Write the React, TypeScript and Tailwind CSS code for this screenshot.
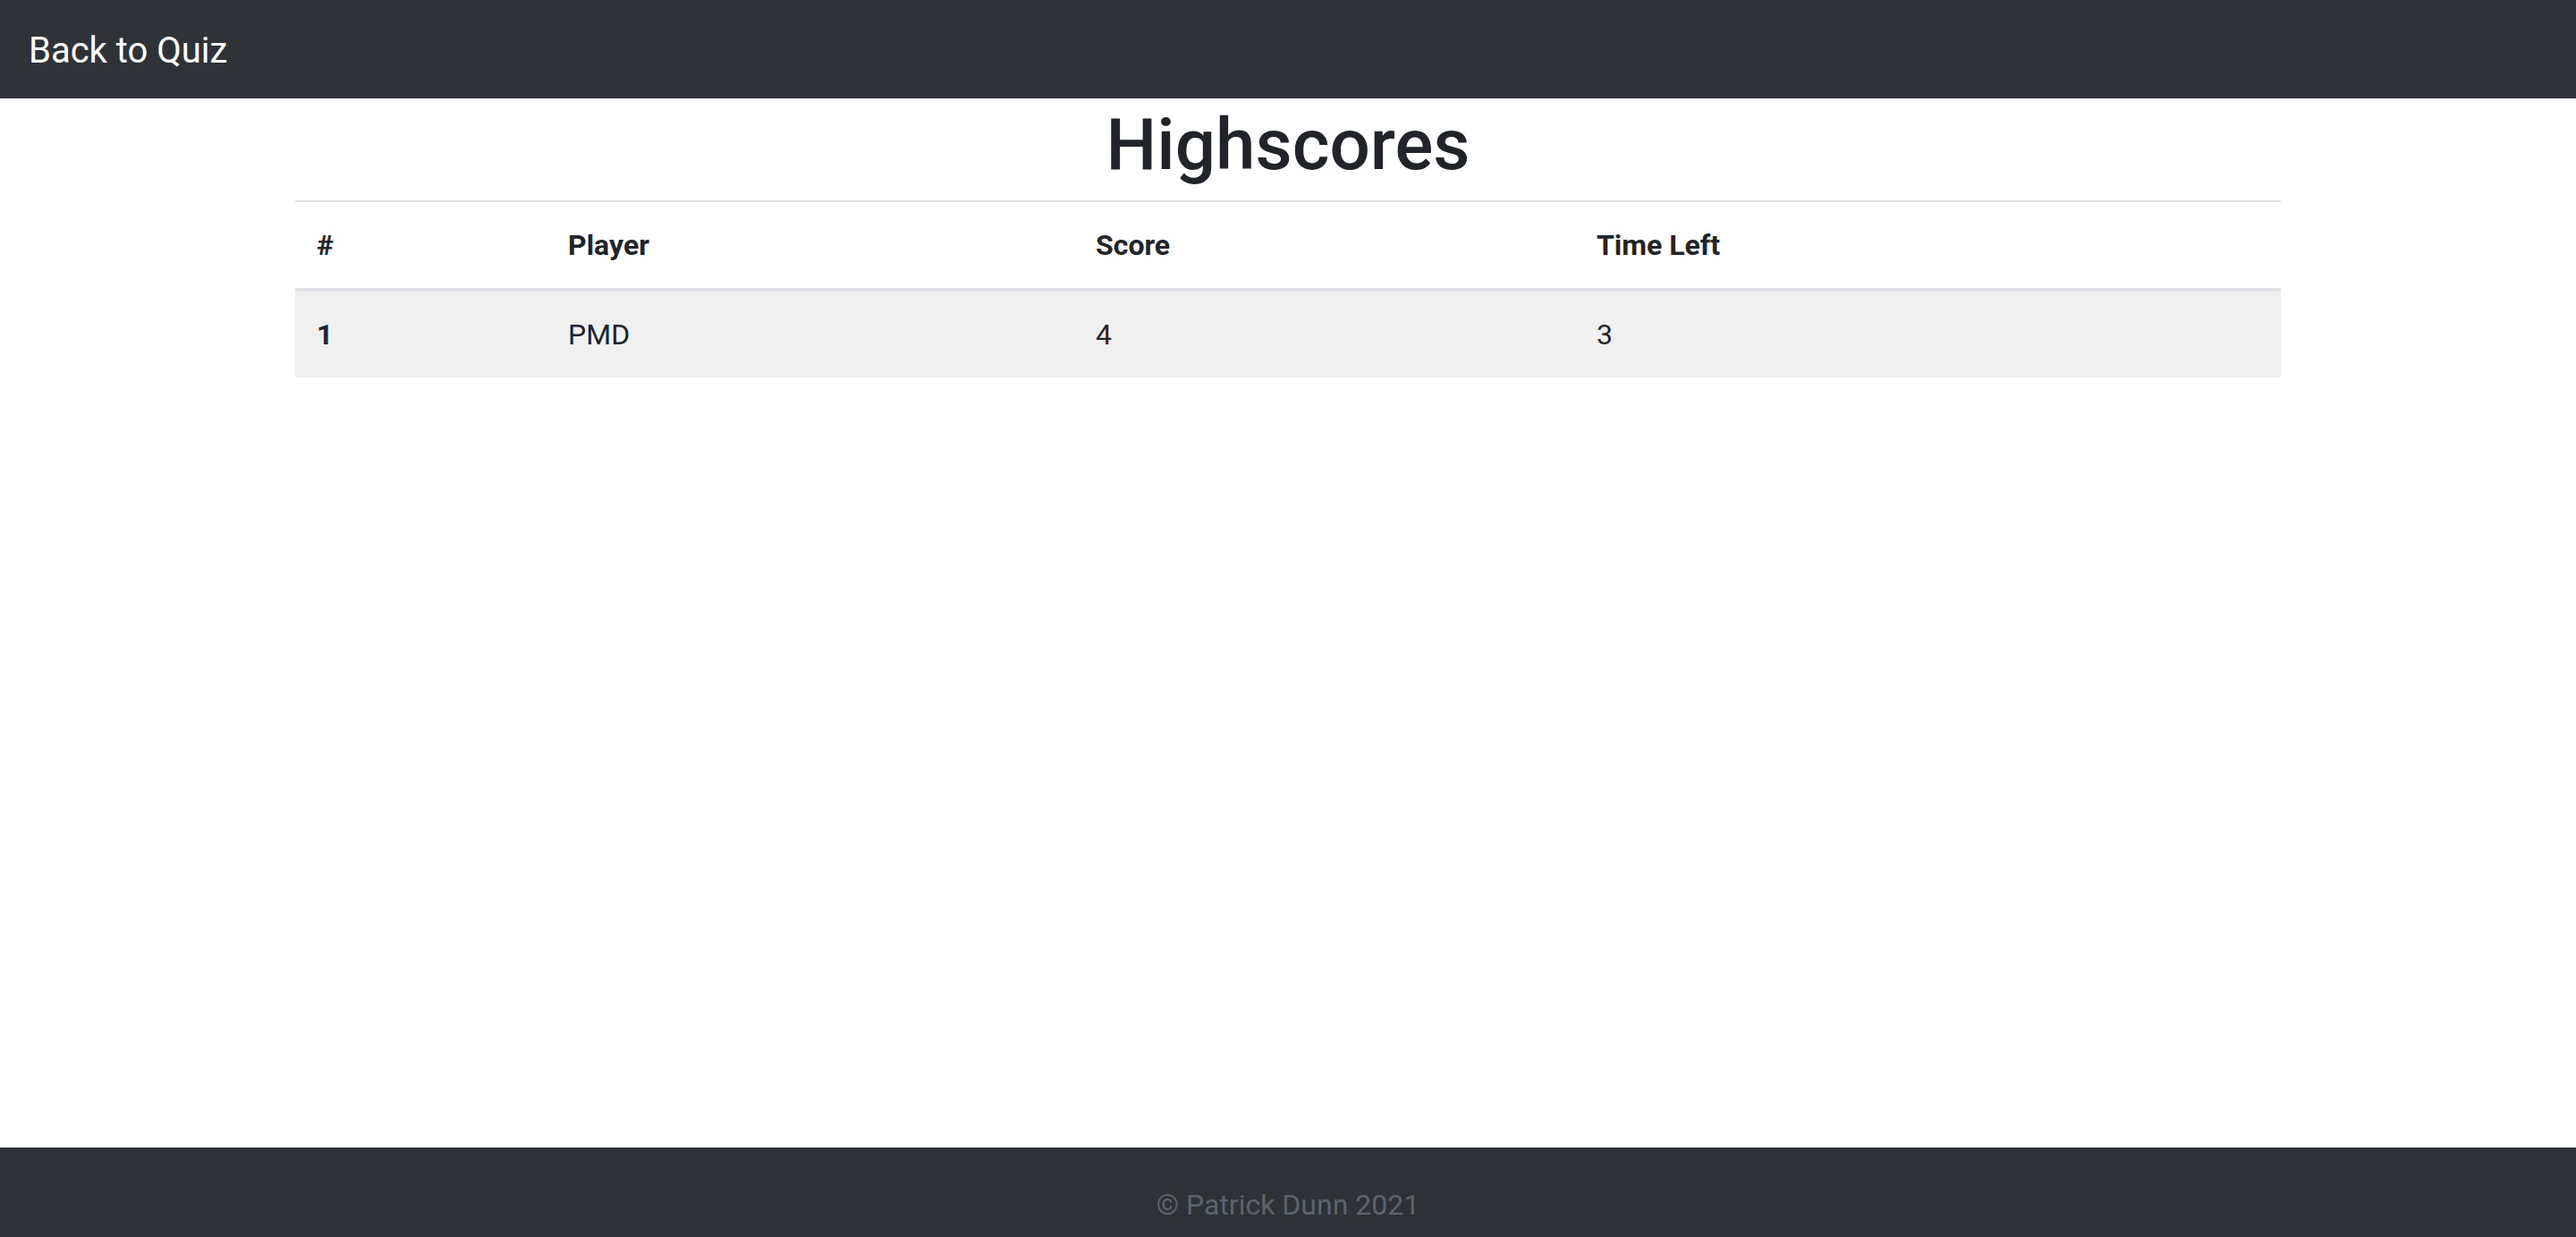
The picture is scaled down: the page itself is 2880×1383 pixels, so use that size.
export default function App() {
  const scores = [{ rank: 1, player: "PMD", score: 4, timeLeft: 3 }]

  return (
    <div className="min-h-screen flex flex-col bg-white text-[#212529] font-['Roboto','Liberation_Sans',sans-serif]">
      <nav className="h-[110px] bg-[#2f3337] flex items-center px-8 pt-[3px]">
        <a className="text-[40px] leading-[60px] text-white">Back to Quiz</a>
      </nav>

      <main className="flex-1">
        <div className="w-[2220px] mx-auto">
          <h1 className="text-[80px] leading-[96px] font-medium text-center mt-[2px] pt-[2px] mb-[14px]">Highscores</h1>
          <table className="w-full text-[32px] leading-[48px] border-collapse">
            <thead>
              <tr className="border-t-2 border-b-4 border-[#dee2e6]">
                <th className="w-[281px] p-6 text-left font-bold">#</th>
                <th className="w-[590px] p-6 text-left font-bold">Player</th>
                <th className="w-[560px] p-6 text-left font-bold">Score</th>
                <th className="p-6 text-left font-bold">Time Left</th>
              </tr>
            </thead>
            <tbody>
              {scores.map((s) => (
                <tr key={s.rank} className="bg-[#f0f0f0]">
                  <th className="p-6 text-left font-bold">{s.rank}</th>
                  <td className="p-6">{s.player}</td>
                  <td className="p-6">{s.score}</td>
                  <td className="p-6">{s.timeLeft}</td>
                </tr>
              ))}
            </tbody>
          </table>
        </div>
      </main>

      <footer className="h-[100px] bg-[#2e3236] text-center pt-[40px]">
        <span className="text-[32px] leading-[48px] text-[#5d636a]">© Patrick Dunn 2021</span>
      </footer>
    </div>
  )
}
